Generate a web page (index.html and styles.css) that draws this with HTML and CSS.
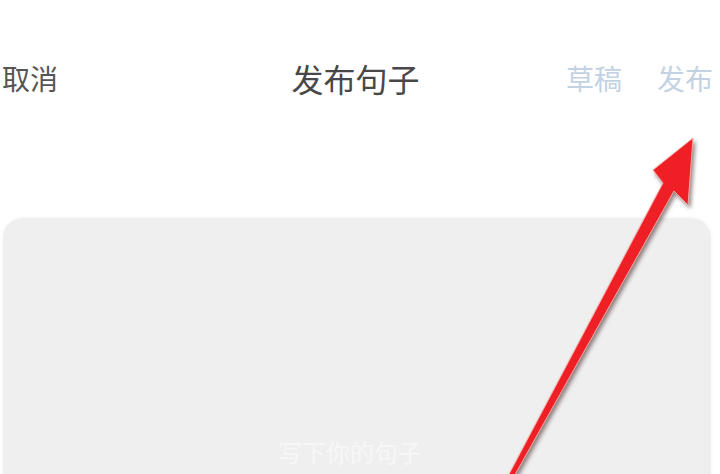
FILE: index.html
```html
<!DOCTYPE html>
<html lang="zh-CN">
<head>
    <meta charset="UTF-8">
    <title>发布句子</title>
    <meta name="viewport" content="width=device-width, initial-scale=1.0">
    <link rel="stylesheet" href="styles.css">
</head>
<body>

<div class="page">
    <div class="topbar">
        <div class="cancel">取消</div>
        <div class="title">发布句子</div>
        <div class="actions">
            <span>草稿</span>
            <span>发布</span>
        </div>
    </div>

    <div class="editor">
        <div class="placeholder">写下你的句子</div>
    </div>
</div>

<svg class="arrow" width="720" height="474" viewBox="0 0 720 474">
    <polygon points="693,138 688,205 674,191 512,480 506,480 663,183 653,170"/>
</svg>

</body>
</html>
```

FILE: styles.css
```css
:root {
    --texto: #555;
    --azul-claro: #c3d2e3;
    --cinza-card: #efefef;
}

body {
    margin: 0;
    padding: 0;
    background-color: #fff;
    font-family: "Noto Sans CJK SC", "Noto Sans", sans-serif;
    overflow: hidden;
}

.page {
    width: 720px;
    height: 474px;
    overflow: hidden;
}

.topbar {
    display: grid;
    grid-template-columns: 1fr auto 1fr;
    align-items: center;
    height: 80px;
    margin-top: 38px;
    padding: 0 7px 0 2px;
}

.cancel {
    font-size: 28px;
    color: var(--texto);
}

.title {
    font-size: 32px;
    color: #484848;
    padding-right: 4px;
}

.actions {
    display: flex;
    justify-content: flex-end;
    gap: 35px;
    font-size: 28px;
    color: var(--azul-claro);
}

.editor {
    margin: 100px 9px 0 3px;
    height: 320px;
    background-color: var(--cinza-card);
    border-radius: 20px;
    box-shadow: 0 0 4px rgba(0, 0, 0, 0.05);
    position: relative;
}

.placeholder {
    position: absolute;
    left: 275px;
    top: 216px;
    font-size: 24px;
    color: #f7f7f7;
}

.arrow {
    position: absolute;
    left: 0;
    top: 0;
    pointer-events: none;
}

.arrow polygon {
    fill: #ee1f25;
    stroke: #f6a9a3;
    stroke-width: 1;
    filter: drop-shadow(2px 3px 2px rgba(60, 30, 30, 0.55));
}
```
